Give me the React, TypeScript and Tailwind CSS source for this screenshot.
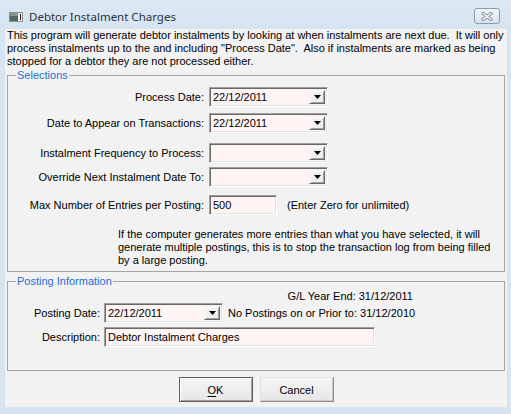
import React from "react";

const sunken =
  "border border-t-[#a0a0a0] border-l-[#a0a0a0] border-b-[#ffffff] border-r-[#ffffff] shadow-[inset_1px_1px_0_#696969,inset_-1px_-1px_0_#e3e3e3]";

function Arrow() {
  return (
    <div className="h-full w-[16px] bg-[#f0f0f0] border border-t-[#f0f0f0] border-l-[#f0f0f0] border-b-[#696969] border-r-[#696969] shadow-[inset_1px_1px_0_#ffffff,inset_-1px_-1px_0_#a0a0a0] flex items-center justify-center">
      <svg width="7" height="4" viewBox="0 0 7 4">
        <path d="M0 0H7L3.5 4Z" fill="#000" />
      </svg>
    </div>
  );
}

function Combo({ value, w }: { value: string; w: string }) {
  return (
    <div className={`${w} h-[20px] bg-[#fff4f4] ${sunken} flex items-center p-[2px]`}>
      <div className="flex-1 pl-[1px] leading-[14px] whitespace-nowrap">{value}</div>
      <Arrow />
    </div>
  );
}

function TextBox({ value, w }: { value: string; w: string }) {
  return (
    <div className={`${w} h-[20px] bg-[#fff4f4] ${sunken} flex items-center px-[3px] leading-[14px] whitespace-nowrap`}>
      {value}
    </div>
  );
}

function Row({
  label,
  labelW,
  gap,
  mt,
  children,
}: {
  label: string;
  labelW: string;
  gap: string;
  mt: string;
  children: React.ReactNode;
}) {
  return (
    <div className={`flex items-center ${mt} ${gap}`}>
      <div className={`${labelW} text-right whitespace-nowrap leading-[14px]`}>{label}</div>
      {children}
    </div>
  );
}

export default function App() {
  return (
    <div className="w-[511px] h-[414px] bg-[#d7e5f2] flex flex-col font-['Liberation_Sans',Arial,sans-serif] text-[11px] text-black overflow-hidden">
      {/* title bar */}
      <div className="h-[29px] flex items-start bg-gradient-to-b from-[#dce8f4] to-[#d6e4f1]">
        <svg className="ml-[9px] mt-[12px]" width="14" height="10" viewBox="0 0 14 10">
          <rect x="0.5" y="0.5" width="13" height="9" fill="#f4f4f4" stroke="#8c8c8c" />
          <rect x="1" y="1" width="8" height="8" fill="#4e6b62" />
          <rect x="1" y="1" width="8" height="3" fill="#7d9990" />
          <rect x="11" y="2" width="1" height="6" fill="#222" />
        </svg>
        <div className="ml-[6px] mt-[10px] font-['Noto_Sans',sans-serif] text-[11.5px] leading-[14px] text-[#2a3440]">
          Debtor Instalment Charges
        </div>
        <div className="ml-auto mr-[11px] mt-[8px] w-[26px] h-[16px] rounded-[3px] border border-[#8a9cb0] bg-gradient-to-b from-[#f2f6fa] to-[#d9e3ee] flex items-center justify-center">
          <svg width="12" height="9" viewBox="0 0 12 9">
            <path d="M2 1.5L10 7.5M10 1.5L2 7.5" stroke="#7d8b9b" strokeWidth="3.2" strokeLinecap="round" />
            <path d="M2 1.5L10 7.5M10 1.5L2 7.5" stroke="#ffffff" strokeWidth="1.4" strokeLinecap="round" />
          </svg>
        </div>
      </div>

      {/* client area */}
      <div className="flex-1 ml-[5px] mr-[4px] mb-[7px] bg-[#f2f2f2] flex flex-col">
        <div className="px-[2px] leading-[13px] whitespace-pre">
          This program will generate debtor instalments by looking at when instalments are next due.  It will only
          <br />
          process instalments up to the and including "Process Date".  Also if instalments are marked as being
          <br />
          stopped for a debtor they are not processed either.
        </div>

        {/* Selections */}
        <fieldset className="mx-[2px] border border-[#a6a6a6] pb-[4px]">
          <legend className="ml-[8px] px-[1px] leading-[14px] text-[#1f6fd4]">Selections</legend>
          <Row label="Process Date:" labelW="w-[196px]" gap="gap-[5px]" mt="mt-[5px]">
            <Combo value="22/12/2011" w="w-[119px]" />
          </Row>
          <Row label="Date to Appear on Transactions:" labelW="w-[196px]" gap="gap-[5px]" mt="mt-[6px]">
            <Combo value="22/12/2011" w="w-[119px]" />
          </Row>
          <Row label="Instalment Frequency to Process:" labelW="w-[196px]" gap="gap-[5px]" mt="mt-[10px]">
            <Combo value="" w="w-[119px]" />
          </Row>
          <Row label="Override Next Instalment Date To:" labelW="w-[196px]" gap="gap-[5px]" mt="mt-[4px]">
            <Combo value="" w="w-[119px]" />
          </Row>
          <Row label="Max Number of Entries per Posting:" labelW="w-[196px]" gap="gap-[5px]" mt="mt-[8px]">
            <TextBox value="500" w="w-[68px]" />
            <div className="ml-[5px] whitespace-nowrap leading-[14px]">(Enter Zero for unlimited)</div>
          </Row>
          <div className="mt-[13px] ml-[110px] leading-[13px] whitespace-nowrap">
            If the computer generates more entries than what you have selected, it will
            <br />
            generate multiple postings, this is to stop the transaction log from being filled
            <br />
            by a large posting.
          </div>
        </fieldset>

        {/* Posting Information */}
        <fieldset className="mx-[2px] mt-[2px] border border-[#a6a6a6] pb-[23px]">
          <legend className="ml-[8px] px-[1px] leading-[14px] text-[#1f6fd4]">Posting Information</legend>
          <div className="mt-[2px] w-[405px] text-right leading-[13px] whitespace-nowrap">
            G/L Year End: 31/12/2011
          </div>
          <Row label="Posting Date:" labelW="w-[92px]" gap="gap-[4px]" mt="mt-0">
            <Combo value="22/12/2011" w="w-[119px]" />
            <div className="ml-[1px] whitespace-nowrap leading-[14px]">No Postings on or Prior to: 31/12/2010</div>
          </Row>
          <Row label="Description:" labelW="w-[92px]" gap="gap-[4px]" mt="mt-[4px]">
            <TextBox value="Debtor Instalment Charges" w="w-[271px]" />
          </Row>
        </fieldset>

        {/* buttons */}
        <div className="mt-[6px] flex justify-center gap-[7px]">
          <button className="w-[74px] h-[25px] bg-gradient-to-b from-[#f6f6f6] to-[#e6e6e6] border border-[#5e5e5e] shadow-[inset_1px_1px_0_#ffffff,inset_-1px_-1px_0_#a0a0a0] leading-[14px]">
            <span className="underline underline-offset-[2px]">O</span>K
          </button>
          <button className="w-[74px] h-[25px] bg-gradient-to-b from-[#f6f6f6] to-[#e6e6e6] border border-t-[#e0e0e0] border-l-[#e0e0e0] border-b-[#8c8c8c] border-r-[#8c8c8c] shadow-[inset_-1px_-1px_0_#c8c8c8] leading-[14px]">
            Cancel
          </button>
        </div>
      </div>
    </div>
  );
}
